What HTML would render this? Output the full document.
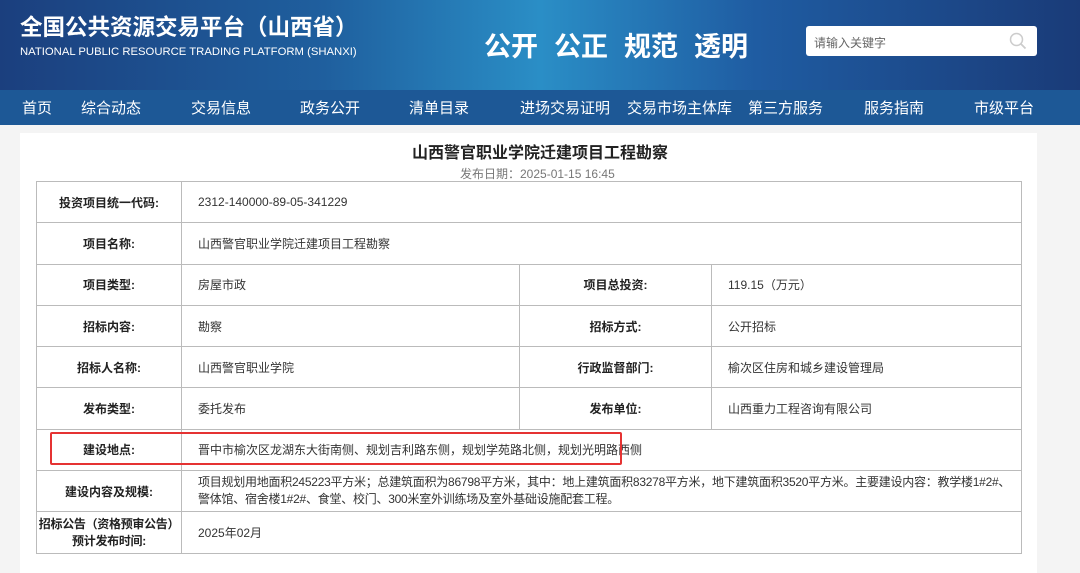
<!DOCTYPE html>
<html><head><meta charset="utf-8"><style>
*{margin:0;padding:0;box-sizing:border-box}
body{width:1080px;height:569px;overflow:hidden;background:#f4f4f4;font-family:"Liberation Sans","Noto Sans CJK SC",sans-serif;position:relative}
.hd{position:absolute;left:0;top:0;width:1080px;height:90px;background:linear-gradient(90deg,#1b3f7e 0%,#1f5f9e 30%,#2a8ec6 50%,#1f5ca2 70%,#1a3b78 100%)}
.t1{position:absolute;left:20px;top:10px;color:#fff;font-size:22.5px;font-weight:bold;letter-spacing:0}
.t2{position:absolute;left:20px;top:46px;color:#fff;font-size:11.3px}
.sl{position:absolute;left:484px;top:25px;color:#fff;font-size:27px;font-weight:bold;word-spacing:0}
.sl span{margin-right:16px}
.sb{position:absolute;left:806px;top:26px;width:231px;height:30px;background:#fff;border-radius:3px;font-size:12px;color:#666;padding:8px 0 0 8px}
.nav{position:absolute;left:0;top:90px;width:1080px;height:35px;background:#1d5896;color:#fff;font-size:15px}
.nav span{position:absolute;top:7px}
.pn{position:absolute;left:20px;top:133px;width:1017px;height:440px;background:#fff}
.tt{position:absolute;left:0;width:1080px;top:139px;text-align:center;font-size:16px;font-weight:bold;color:#222}
.dt{position:absolute;left:460px;top:165px;font-size:12px;color:#777}
table{position:absolute;left:36px;top:181px;width:986px;border-collapse:collapse;font-size:12px;color:#333}
td{border:1px solid #bbb;padding:0 6px 0 16px;height:41.3px}
td.l{font-weight:bold;text-align:center;width:145px;color:#222;padding:0}
.rb{position:absolute;left:50px;top:432px;width:572px;height:33px;border:2px solid #e53333;border-radius:2px}
</style></head><body>
<div class="hd">
<div class="t1">全国公共资源交易平台（山西省）</div>
<div class="t2">NATIONAL PUBLIC RESOURCE TRADING PLATFORM (SHANXI)</div>
<div class="sl"><span>公开</span><span>公正</span><span>规范</span><span>透明</span></div>
<div class="sb">请输入关键字<svg style="position:absolute;right:10px;top:6px" width="18" height="18" viewBox="0 0 18 18"><circle cx="7.5" cy="7.5" r="6" fill="none" stroke="#ccc" stroke-width="1.5"/><path d="M12 12l4.5 4.5" stroke="#ccc" stroke-width="1.8"/></svg></div>
</div>
<div class="nav">
<span style="left:22px">首页</span><span style="left:81px">综合动态</span><span style="left:191px">交易信息</span><span style="left:300px">政务公开</span><span style="left:409px">清单目录</span><span style="left:520px">进场交易证明</span><span style="left:627px">交易市场主体库</span><span style="left:748px">第三方服务</span><span style="left:864px">服务指南</span><span style="left:974px">市级平台</span>
</div>
<div class="pn"></div>
<div class="tt">山西警官职业学院迁建项目工程勘察</div>
<div class="dt">发布日期：2025-01-15 16:45</div>
<table>
<tr><td class="l">投资项目统一代码:</td><td colspan="3">2312-140000-89-05-341229</td></tr>
<tr><td class="l">项目名称:</td><td colspan="3">山西警官职业学院迁建项目工程勘察</td></tr>
<tr><td class="l">项目类型:</td><td style="width:338px">房屋市政</td><td class="l" style="width:192px">项目总投资:</td><td>119.15（万元）</td></tr>
<tr><td class="l">招标内容:</td><td>勘察</td><td class="l">招标方式:</td><td>公开招标</td></tr>
<tr><td class="l">招标人名称:</td><td>山西警官职业学院</td><td class="l">行政监督部门:</td><td>榆次区住房和城乡建设管理局</td></tr>
<tr><td class="l">发布类型:</td><td>委托发布</td><td class="l">发布单位:</td><td>山西重力工程咨询有限公司</td></tr>
<tr><td class="l">建设地点:</td><td colspan="3">晋中市榆次区龙湖东大街南侧、规划吉利路东侧，规划学苑路北侧，规划光明路西侧</td></tr>
<tr><td class="l">建设内容及规模:</td><td colspan="3" style="line-height:17px;letter-spacing:-0.25px;padding-right:2px">项目规划用地面积245223平方米；总建筑面积为86798平方米，其中：地上建筑面积83278平方米，地下建筑面积3520平方米。主要建设内容：教学楼1#2#、警体馆、宿舍楼1#2#、食堂、校门、300米室外训练场及室外基础设施配套工程。</td></tr>
<tr><td class="l" style="line-height:17px;letter-spacing:-0.3px">招标公告（资格预审公告）<br>预计发布时间:</td><td colspan="3">2025年02月</td></tr>
</table>
<div class="rb"></div>
</body></html>
